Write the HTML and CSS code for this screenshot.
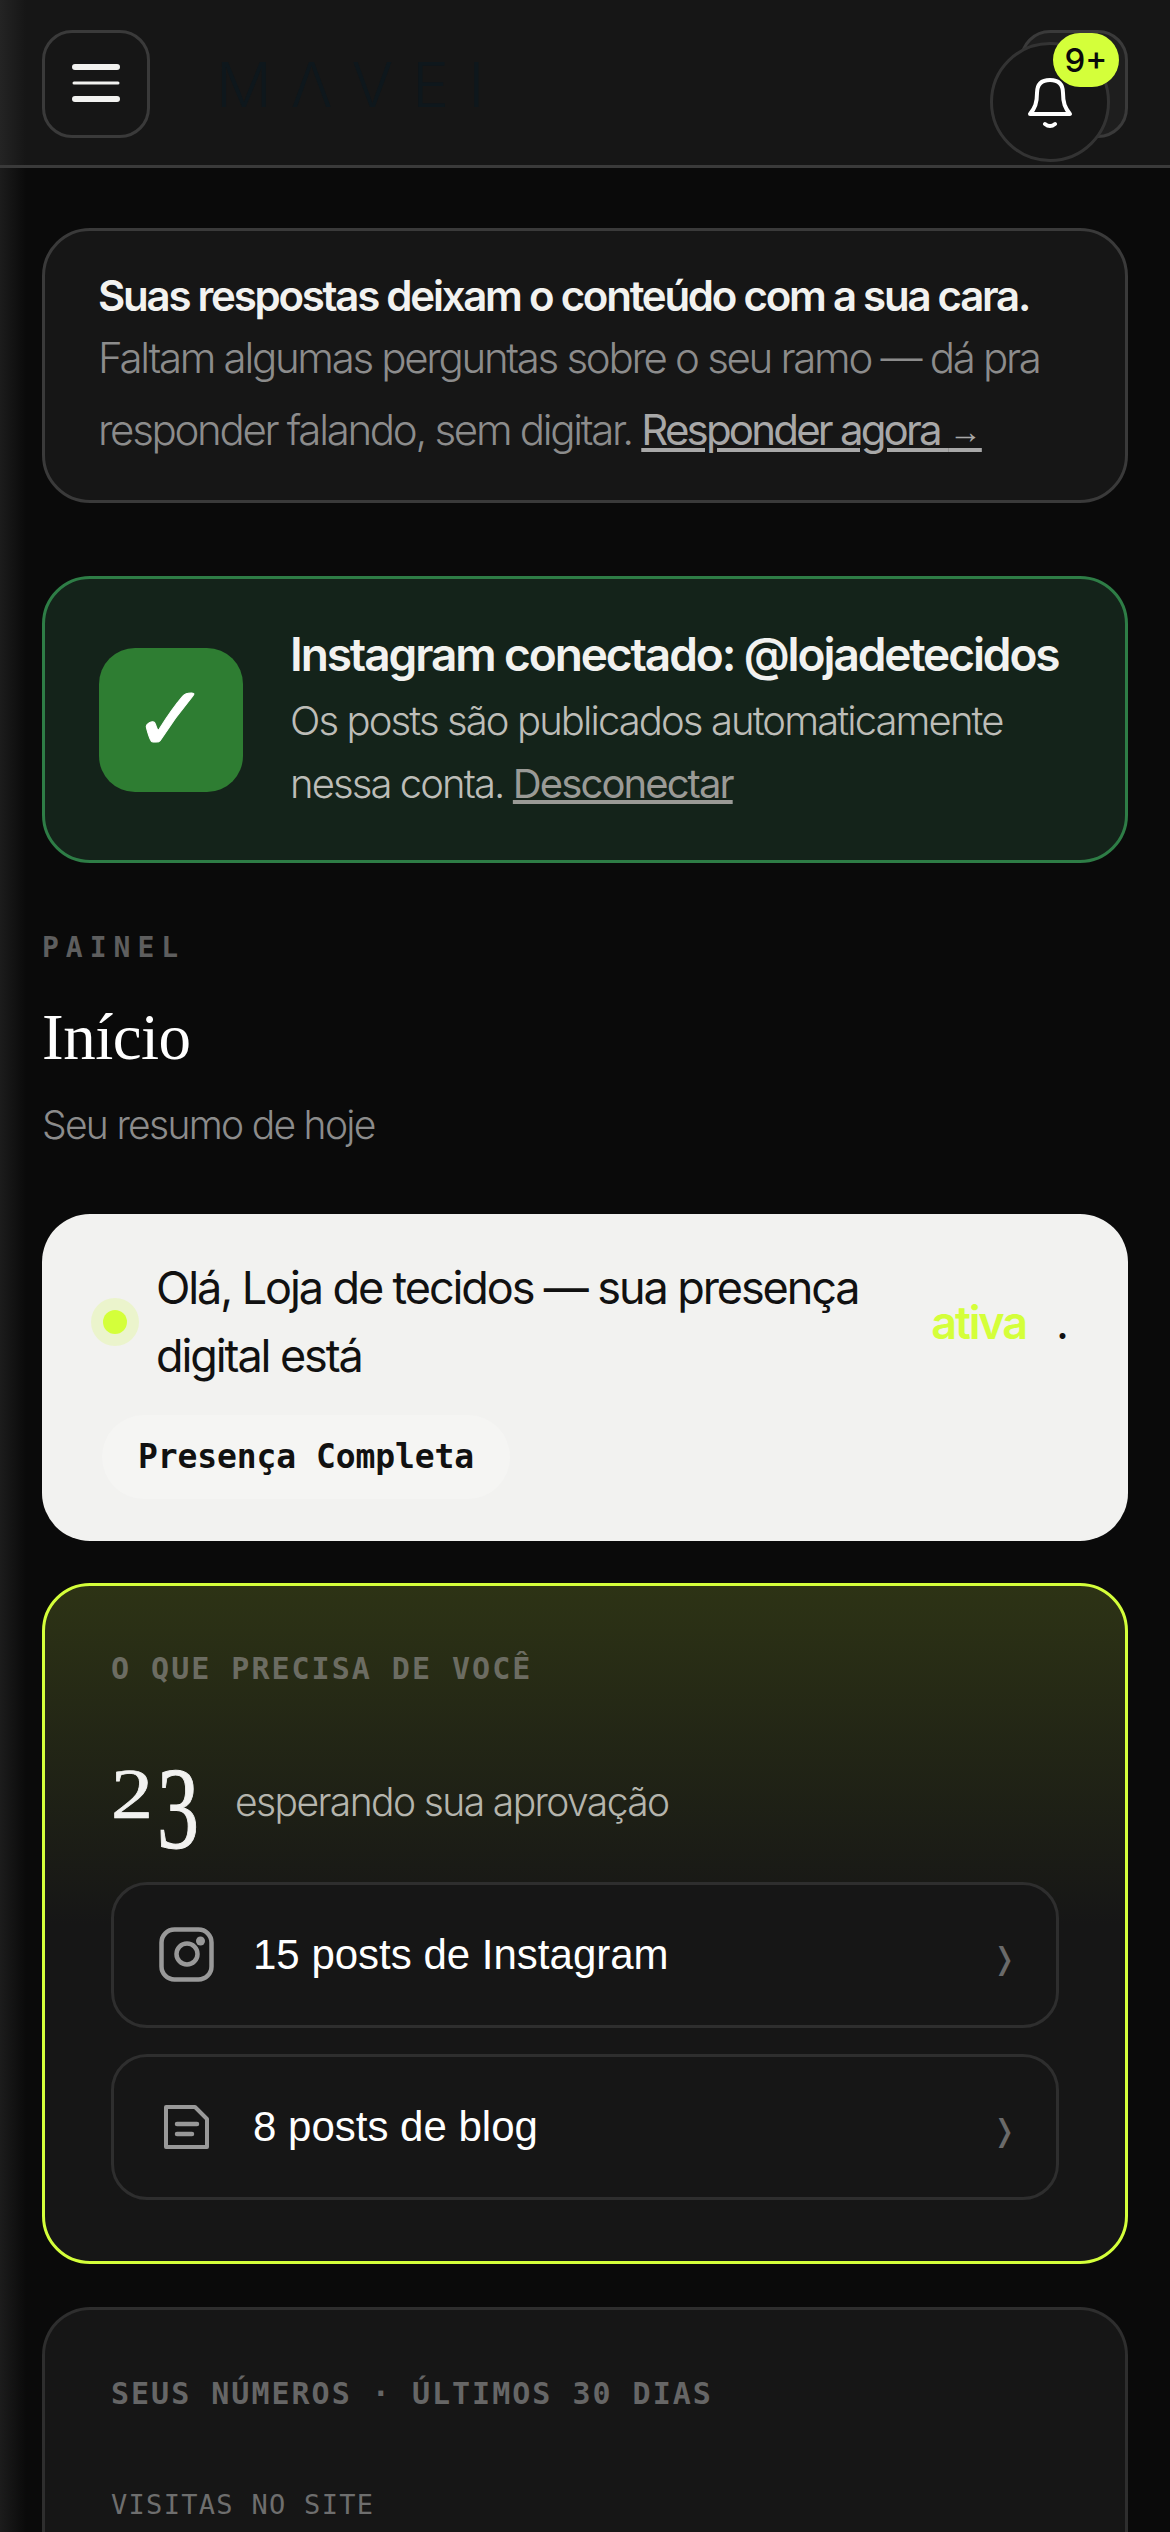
FILE: index.html
```html
<!DOCTYPE html>
<html lang="pt-br">
<head>
    <meta charset="UTF-8">
    <meta name="viewport" content="width=device-width, initial-scale=1.0">
    <title>Mavei - Painel</title>
    <link rel="stylesheet" href="styles.css">
</head>
<body>
    <header class="topbar">
        <div class="topbar-left">
            <button class="icon-btn" aria-label="Menu">
                <svg width="48" height="40" viewBox="0 0 48 40" stroke="#f2f2f0" stroke-linecap="round"><path d="M3 3H45M3 35H45" stroke-width="6"/><path d="M2 19H46" stroke-width="3"/></svg>
            </button>
            <span class="logo">MΛVEI</span>
        </div>
        <div class="topbar-right">
            <span class="ghost-btn"></span>
            <button class="bell" aria-label="Notificações">
                <svg width="48" height="54" viewBox="0 0 48 54" fill="none" stroke="#fff" stroke-width="4" stroke-linecap="round" stroke-linejoin="round"><path d="M4 39C9 33 11 28 11 18C11 9 16 5 24 5C32 5 37 9 37 18C37 28 39 33 44 39Z"/><path d="M19 49Q24 53 29 49"/></svg>
                <span class="badge">9+</span>
            </button>
        </div>
    </header>

    <main class="content">
        <section class="card prompt">
            <p class="prompt-title">Suas respostas deixam o conteúdo com a sua cara.</p>
            <p class="prompt-text">Faltam algumas perguntas sobre o seu ramo — dá pra responder falando, sem digitar. <a href="#">Responder agora <span class="arrow">→</span></a></p>
        </section>

        <section class="card connected">
            <div class="check">✓</div>
            <div class="connected-body">
                <p class="connected-title">Instagram conectado: @lojadetecidos</p>
                <p class="connected-text">Os posts são publicados automaticamente nessa conta. <a href="#">Desconectar</a></p>
            </div>
        </section>

        <div class="page-head">
            <p class="eyebrow">PAINEL</p>
            <h1>Início</h1>
            <p class="subtitle">Seu resumo de hoje</p>
        </div>

        <section class="hero">
            <div class="hero-line">
                <span class="dot"></span>
                <span class="hero-text">Olá, Loja de tecidos — sua presença digital está</span>
                <span class="hero-active">ativa</span>
                <span class="hero-period">.</span>
            </div>
            <span class="pill">Presença Completa</span>
        </section>

        <section class="card pending">
            <p class="card-label">O QUE PRECISA DE VOCÊ</p>
            <div class="pending-count">
                <span class="big-num"><span class="num-high">2</span><span class="num-low">3</span></span>
                <span class="pending-text">esperando sua aprovação</span>
            </div>
            <a class="row" href="#">
                <svg class="row-icon" width="60" height="60" viewBox="0 0 60 60" fill="none" stroke="#999" stroke-width="4.5"><rect x="4.5" y="4.5" width="50" height="50" rx="13"/><circle cx="30" cy="29" r="10.5"/><circle cx="43.5" cy="16" r="4.5" fill="#999" stroke="none"/></svg>
                <span class="row-text">15 posts de Instagram</span>
                <span class="chevron">❭</span>
            </a>
            <a class="row" href="#">
                <svg class="row-icon" width="60" height="60" viewBox="0 0 60 60" fill="none" stroke="#999" stroke-width="4" stroke-linejoin="round"><path d="M9 10H38L50 22V50H9Z"/><path d="M20 27H40M20 37H35" stroke-width="4.5" stroke-linecap="round"/></svg>
                <span class="row-text">8 posts de blog</span>
                <span class="chevron">❭</span>
            </a>
        </section>

        <section class="card stats">
            <p class="card-label">SEUS NÚMEROS · ÚLTIMOS 30 DIAS</p>
            <p class="stat-label">VISITAS NO SITE</p>
        </section>
    </main>
</body>
</html>
```

FILE: styles.css
```css
* {
    box-sizing: border-box;
}

html, body {
    margin: 0;
    height: 2532px;
    overflow: hidden;
}

body {
    background: linear-gradient(90deg, #1c1c1c 0, #0a0a0a 26px);
    font-family: Inter, "Liberation Sans", sans-serif;
    color: #f2f2f0;
}

p, h1 {
    margin: 0;
}

a {
    color: inherit;
}

.topbar {
    height: 168px;
    padding: 30px 42px 0;
    display: flex;
    justify-content: space-between;
    align-items: flex-start;
    background: linear-gradient(90deg, #242424 0, #161616 26px);
    border-bottom: 3px solid #3a3a3a;
}

.topbar-left {
    display: flex;
    align-items: center;
    gap: 66px;
}

.icon-btn {
    width: 108px;
    height: 108px;
    display: flex;
    align-items: center;
    justify-content: center;
    background: none;
    border: 3px solid #3a3a3a;
    border-radius: 30px;
    padding: 0;
}

.logo {
    font-family: Inter, sans-serif;
    font-size: 62px;
    font-weight: 300;
    letter-spacing: 19px;
    color: #0e171c;
}

.topbar-right {
    position: relative;
    width: 108px;
    height: 108px;
}

.ghost-btn {
    display: block;
    width: 108px;
    height: 108px;
    border: 3px solid #3a3a3a;
    border-radius: 30px;
    background-color: #1e1e1e;
}

.bell {
    position: absolute;
    left: -30px;
    top: 12px;
    width: 120px;
    height: 120px;
    background-color: #161616;
    border: 3px solid #333;
    border-radius: 50%;
    padding: 0;
    display: flex;
    align-items: center;
    justify-content: center;
}

.badge {
    position: absolute;
    left: 60px;
    top: -12px;
    width: 66px;
    height: 54px;
    border-radius: 27px;
    background-color: #d4ff3a;
    color: #0a0a0a;
    font-family: Inter, sans-serif;
    font-size: 33px;
    font-weight: 500;
    display: flex;
    align-items: center;
    justify-content: center;
}

.content {
    padding: 60px 42px 0;
}

.card {
    border: 3px solid #3a3a3a;
    border-radius: 48px;
    background-color: #161616;
}

.prompt {
    height: 275px;
    padding: 39px 54px 0 53px;
}

.prompt-title {
    font-size: 42px;
    font-weight: 600;
    letter-spacing: -2.25px;
    line-height: 52px;
}

.prompt-text {
    font-size: 42px;
    font-weight: 300;
    letter-spacing: -2.3px;
    line-height: 72px;
    color: #8c8c8c;
}

.prompt-text a {
    font-weight: 400;
    letter-spacing: -2.8px;
    color: #a8a8a8;
}

.arrow {
    font-family: "Liberation Sans", sans-serif;
    font-size: 33px;
    letter-spacing: 0;
    vertical-align: 2px;
}

.connected {
    margin-top: 73px;
    height: 287px;
    padding: 0 54px;
    display: flex;
    align-items: center;
    gap: 47px;
    background-color: #14231a;
    border-color: #2e7d46;
}

.check {
    flex: none;
    width: 144px;
    height: 144px;
    border-radius: 36px;
    background-color: #2e7d32;
    color: #fff;
    font-family: "DejaVu Sans", sans-serif;
    font-size: 92px;
    -webkit-text-stroke: 1px #fff;
    display: flex;
    align-items: center;
    justify-content: center;
}

.connected-title {
    font-size: 46px;
    font-weight: 600;
    letter-spacing: -2.1px;
    line-height: 58px;
}

.connected-text {
    margin-top: 6px;
    font-size: 40px;
    font-weight: 300;
    letter-spacing: -1.9px;
    line-height: 63px;
    color: #bdbdb8;
}

.connected-text a {
    font-weight: 400;
    color: #9a9a96;
}

.page-head {
    margin-top: 68px;
}

.eyebrow {
    font-family: "DejaVu Sans Mono", monospace;
    font-size: 28px;
    font-weight: 700;
    letter-spacing: 7px;
    color: #5e5e5e;
}

h1 {
    margin-top: 33px;
    font-family: "Liberation Serif", serif;
    font-size: 65px;
    font-weight: 400;
    letter-spacing: -0.5px;
    line-height: 80px;
    color: #fff;
}

.subtitle {
    margin-top: 24px;
    font-size: 39px;
    font-weight: 300;
    letter-spacing: -1.7px;
    color: #8c8c8c;
}

.hero {
    margin-top: 66px;
    height: 327px;
    padding: 40px 54px 0 61px;
    border-radius: 48px;
    background-color: #f2f2f0;
    color: #111;
}

.hero-line {
    display: flex;
    align-items: center;
}

.dot {
    flex: none;
    width: 24px;
    height: 24px;
    margin-right: 29px;
    border-radius: 50%;
    background-color: #d4ff3a;
    box-shadow: 0 0 0 12px rgba(212, 255, 58, 0.2);
}

.hero-text {
    flex: 1;
    font-size: 45px;
    letter-spacing: -2.1px;
    line-height: 68px;
}

.hero-active {
    font-size: 45px;
    font-weight: 600;
    letter-spacing: -2.1px;
    color: #d4ff3a;
    margin-left: 60px;
}

.hero-period {
    font-size: 45px;
    margin-left: 30px;
    margin-right: 5px;
}

.pill {
    display: inline-block;
    margin-top: 25px;
    margin-left: -1px;
    padding: 0 36px;
    height: 84px;
    line-height: 84px;
    border-radius: 42px;
    background-color: #f5f5f3;
    font-family: "DejaVu Sans Mono", monospace;
    font-size: 33px;
    font-weight: 700;
    letter-spacing: -0.1px;
    color: #111;
}

.pending {
    margin-top: 42px;
    height: 681px;
    padding: 65px 66px 0;
    border: 3px solid #d4ff3a;
    background: linear-gradient(180deg, #2d3315 0%, #161616 50%);
}

.card-label {
    font-family: "DejaVu Sans Mono", monospace;
    font-size: 30px;
    font-weight: 700;
    letter-spacing: 2px;
    color: #6c6c62;
}

.pending-count {
    height: 161px;
    margin-top: 35px;
    display: flex;
    align-items: center;
    gap: 36px;
}

.big-num {
    margin-bottom: 7px;
    font-family: "Liberation Serif", serif;
    font-size: 84px;
    line-height: 80px;
    color: #f2f2f0;
    -webkit-text-stroke: 0.8px #f2f2f0;
}

.num-high, .num-low {
    display: inline-block;
    transform-origin: 50% 12px;
}

.num-high {
    transform: scaleY(0.86);
}

.num-low {
    margin-left: 4px;
    transform: scaleY(1.39);
}

.pending-text {
    font-size: 39px;
    font-weight: 300;
    letter-spacing: -1.6px;
    color: #b5b5ad;
}

.row {
    height: 146px;
    margin-top: 26px;
    padding: 0 39px 0 43px;
    display: flex;
    align-items: center;
    gap: 36px;
    border: 3px solid #2e2e2e;
    border-radius: 36px;
    background-color: #161616;
    text-decoration: none;
}

.pending-count + .row {
    margin-top: 0;
}

.row-text {
    flex: 1;
    font-family: "Liberation Sans", sans-serif;
    font-size: 42px;
    color: #fff;
}

.chevron {
    margin-top: 6px;
    font-family: "DejaVu Sans", sans-serif;
    font-size: 30px;
    color: #6a6a6a;
}

.stats {
    margin-top: 43px;
    height: 226px;
    padding: 66px 66px 0;
    border-color: #2e2e2e;
    border-bottom: 0;
    border-radius: 48px 48px 0 0;
}

.stats .card-label {
    color: #666;
}

.stat-label {
    margin-top: 78px;
    font-family: "DejaVu Sans Mono", monospace;
    font-size: 27px;
    letter-spacing: 1.3px;
    color: #6e6e6e;
}
```
